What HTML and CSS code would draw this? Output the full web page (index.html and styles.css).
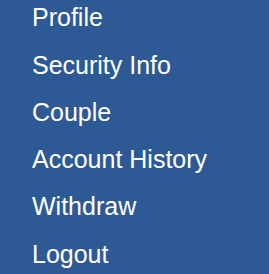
FILE: index.html
```html
<!DOCTYPE html>
<html>
<head>
<meta charset="utf-8">
<link rel="stylesheet" href="styles.css">
</head>
<body>
<nav class="menu">
  <ul class="menu-list">
    <li class="menu-item"><a href="#">Profile</a></li>
    <li class="menu-item"><a href="#">Security Info</a></li>
    <li class="menu-item"><a href="#">Couple</a></li>
    <li class="menu-item"><a href="#">Account History</a></li>
    <li class="menu-item"><a href="#">Withdraw</a></li>
    <li class="menu-item"><a href="#">Logout</a></li>
  </ul>
</nav>
</body>
</html>
```
FILE: styles.css
```css
html, body {
  margin: 0;
  padding: 0;
  background: #2d5a94;
  height: 100%;
  overflow: hidden;
}
.menu {
  font-family: "Liberation Sans", Arial, sans-serif;
}
.menu-list {
  list-style: none;
  margin: -6px 0 0 0;
  padding: 0;
}
.menu-item a {
  display: block;
  padding: 9.25px 0 9.25px 32px;
  font-size: 25px;
  line-height: 28.75px;
  color: #ffffff;
  text-decoration: none;
}
```
